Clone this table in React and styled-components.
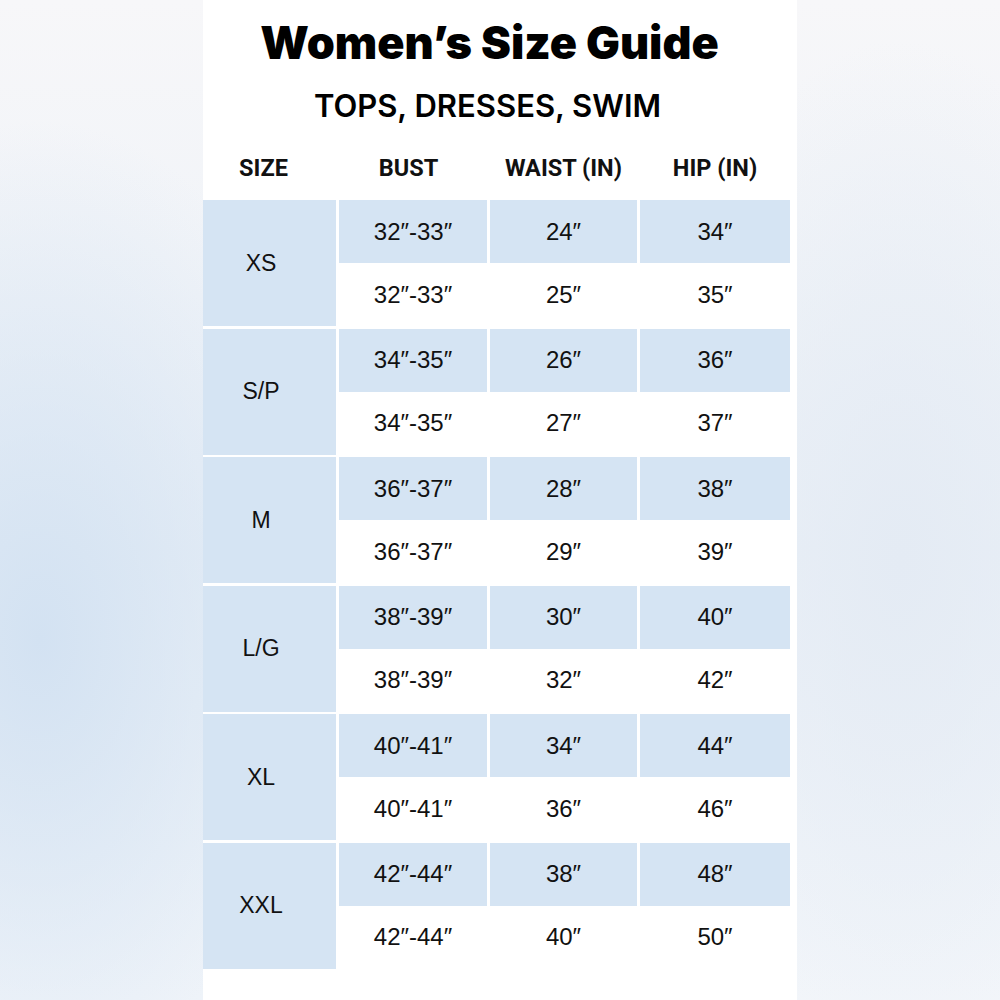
import React from 'react';
import styled, { createGlobalStyle } from 'styled-components';

const GlobalStyle = createGlobalStyle`
  html, body {
    margin: 0;
    padding: 0;
  }
  body {
    width: 1000px;
    height: 1000px;
    overflow: hidden;
    font-family: "Liberation Sans", Arial, sans-serif;
    color: #111;
    background:
      radial-gradient(ellipse 320px 520px at 40px 640px, rgba(211, 226, 242, 1) 0%, rgba(211, 226, 242, 0) 100%),
      radial-gradient(ellipse 260px 520px at 900px 560px, rgba(228, 235, 244, 1) 0%, rgba(228, 235, 244, 0) 100%),
      linear-gradient(180deg, #f7f7f9 0%, #eaf0f7 55%, #f3f6fa 100%);
  }
`;

const Page = styled.div`
  width: 1000px;
  height: 1000px;
  display: flex;
  justify-content: center;
`;

const Sheet = styled.div`
  width: 594px;
  height: 1000px;
  box-sizing: border-box;
  padding-right: 7px;
  background: #fff;
  display: flex;
  flex-direction: column;
`;

const Title = styled.h1`
  margin: 0;
  height: 84px;
  padding-right: 14px;
  display: flex;
  align-items: center;
  justify-content: center;
  font-family: Inter, "Noto Sans", sans-serif;
  font-weight: 900;
  font-size: 45px;
  letter-spacing: 0;
  color: #000;
`;

const Subtitle = styled.h2`
  margin: 0;
  height: 42px;
  padding-right: 18px;
  display: flex;
  align-items: center;
  justify-content: center;
  font-family: Inter, "Noto Sans", sans-serif;
  font-weight: 600;
  font-size: 31px;
  color: #000;
`;

const columns = '133px 148px 147px 150px';

const HeaderRow = styled.div`
  margin-top: 10px;
  height: 64px;
  display: grid;
  grid-template-columns: ${columns};
  column-gap: 3px;
  align-items: center;
`;

const HeaderCell = styled.div`
  text-align: center;
  font-family: Roboto, "Liberation Sans", sans-serif;
  font-weight: 700;
  font-size: 23.5px;
  color: #111;
  padding-right: ${p => p.$shift || 0}px;
`;

const Table = styled.div`
  display: flex;
  flex-direction: column;
  gap: 2.6px;
`;

const Block = styled.div`
  display: grid;
  grid-template-columns: ${columns};
  grid-template-rows: 63px 63px;
  column-gap: 3px;
`;

const SizeCell = styled.div`
  grid-row: span 2;
  background: #d5e4f3;
  display: flex;
  align-items: center;
  justify-content: center;
  padding-right: 17px;
  font-size: 23px;
`;

const Cell = styled.div`
  background: ${p => (p.$shaded ? '#d5e4f3' : '#fff')};
  display: flex;
  align-items: center;
  justify-content: center;
  font-size: 24px;
`;

const sizes = [
  { size: 'XS', rows: [['32″-33″', '24″', '34″'], ['32″-33″', '25″', '35″']] },
  { size: 'S/P', rows: [['34″-35″', '26″', '36″'], ['34″-35″', '27″', '37″']] },
  { size: 'M', rows: [['36″-37″', '28″', '38″'], ['36″-37″', '29″', '39″']] },
  { size: 'L/G', rows: [['38″-39″', '30″', '40″'], ['38″-39″', '32″', '42″']] },
  { size: 'XL', rows: [['40″-41″', '34″', '44″'], ['40″-41″', '36″', '46″']] },
  { size: 'XXL', rows: [['42″-44″', '38″', '48″'], ['42″-44″', '40″', '50″']] }
];

const App = () => (
  <Page>
    <GlobalStyle />
    <Sheet>
      <Title>Women’s Size Guide</Title>
      <Subtitle>TOPS, DRESSES, SWIM</Subtitle>
      <HeaderRow>
        <HeaderCell $shift={12}>SIZE</HeaderCell>
        <HeaderCell $shift={9}>BUST</HeaderCell>
        <HeaderCell>WAIST (IN)</HeaderCell>
        <HeaderCell>HIP (IN)</HeaderCell>
      </HeaderRow>
      <Table>
        {sizes.map(s => (
          <Block key={s.size}>
            <SizeCell>{s.size}</SizeCell>
            {s.rows.map((row, i) =>
              row.map((value, j) => (
                <Cell key={`${i}-${j}`} $shaded={i === 0}>
                  {value}
                </Cell>
              ))
            )}
          </Block>
        ))}
      </Table>
    </Sheet>
  </Page>
);

export default App;
